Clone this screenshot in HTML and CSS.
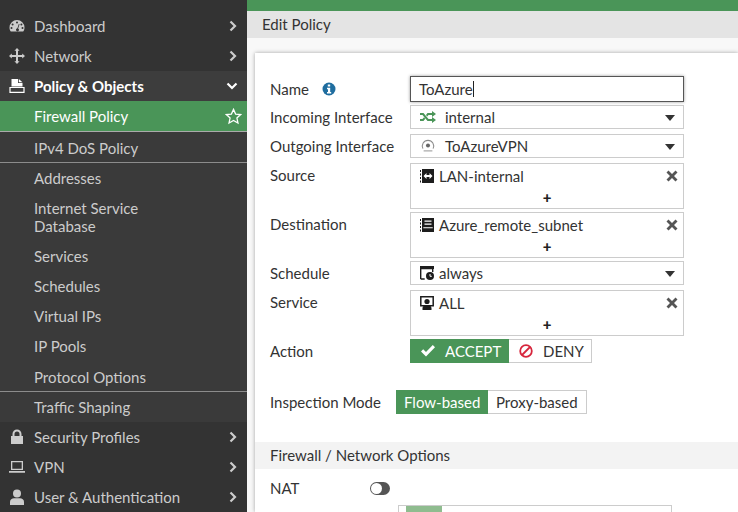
FILE: index.html
```html
<!DOCTYPE html>
<html lang="en">
<head>
<meta charset="utf-8">
<title>Edit Policy</title>
<link rel="stylesheet" href="styles.css">
</head>
<body>
<div class="app">
  <nav class="sidebar">
    <div class="nav-spacer"></div>
    <div class="nav-item">
      <svg class="nav-icon" viewBox="0 0 16 16"><path fill-rule="evenodd" d="M8 2a7.500 7.500 0 0 0-7.500 7.500c0 1.600.5 3 1.300 4h12.400c.8-1 1.300-2.400 1.300-4A7.500 7.500 0 0 0 8 2zM8 3.500a1 1 0 1 1 0 2 1 1 0 0 1 0-2zM3.600 5.400a1 1 0 1 1 0 2 1 1 0 0 1 0-2zM2.500 9a1 1 0 1 1 0 2 1 1 0 0 1 0-2zM12.400 5.400a1 1 0 1 1 0 2 1 1 0 0 1 0-2zM13.500 9a1 1 0 1 1 0 2 1 1 0 0 1 0-2zM9.800 6l.8.300-1.500 4.100a1.500 1.500 0 1 1-2.100 1.300c0-.8.600-1.400 1.400-1.500z"/></svg>
      <span class="nav-label">Dashboard</span>
      <svg class="chev" viewBox="0 0 8 12"><path d="M1.500 1.500 6 6l-4.500 4.500" /></svg>
    </div>
    <div class="nav-item">
      <svg class="nav-icon" viewBox="0 0 16 16"><path d="M8 0l2.600 2.800H9v4.200h4.200V5.400L16 8l-2.800 2.600V9H9v4.200h1.600L8 16l-2.600-2.800H7V9H2.800v1.600L0 8l2.800-2.600V7H7V2.800H5.400z"/></svg>
      <span class="nav-label">Network</span>
      <svg class="chev" viewBox="0 0 8 12"><path d="M1.500 1.500 6 6l-4.500 4.500" /></svg>
    </div>
    <div class="nav-item nav-open">
      <svg class="nav-icon" viewBox="0 0 16 16"><path d="M2.500 1h6.500v4h4.500v3.500H2.500z"/><path d="M9.800 1l3.700 3.300H9.800z"/><path fill="none" stroke="#fff" stroke-width="1.200" d="M1 9.500h14v4.800H1z"/></svg>
      <span class="nav-label">Policy &amp; Objects</span>
      <svg class="chev chev-down" viewBox="0 0 12 8"><path d="M1.500 1.500 6 6l4.500-4.500" /></svg>
    </div>
    <div class="sub-item sub-active">
      <span class="nav-label">Firewall Policy</span>
      <svg class="star" viewBox="0 0 16 16"><path d="M8 1.300l2 4.400 4.700.5-3.500 3.200 1 4.700L8 11.700l-4.200 2.400 1-4.700L1.300 6.200 6 5.700z"/></svg>
    </div>
    <div class="sub-item sub-ruled">IPv4 DoS Policy</div>
    <div class="sub-item">Addresses</div>
    <div class="sub-item sub-tall">Internet Service<br>Database</div>
    <div class="sub-item">Services</div>
    <div class="sub-item">Schedules</div>
    <div class="sub-item">Virtual IPs</div>
    <div class="sub-item">IP Pools</div>
    <div class="sub-item sub-ruled">Protocol Options</div>
    <div class="sub-item">Traffic Shaping</div>
    <div class="nav-item">
      <svg class="nav-icon" viewBox="0 0 16 16"><path d="M2 7h12v8H2z"/><path fill="none" stroke="#ccc" stroke-width="2" d="M4.500 7.500V5a3.500 3.500 0 0 1 7 0v2.500"/></svg>
      <span class="nav-label">Security Profiles</span>
      <svg class="chev" viewBox="0 0 8 12"><path d="M1.500 1.500 6 6l-4.500 4.500" /></svg>
    </div>
    <div class="nav-item">
      <svg class="nav-icon" viewBox="0 0 16 16"><path fill-rule="evenodd" d="M2 2h12v9H2zM3.300 3.300v6.400h9.400V3.300zM0 12h16v1.800H0z"/></svg>
      <span class="nav-label">VPN</span>
      <svg class="chev" viewBox="0 0 8 12"><path d="M1.500 1.500 6 6l-4.500 4.500" /></svg>
    </div>
    <div class="nav-item">
      <svg class="nav-icon" viewBox="0 0 16 16"><circle cx="8" cy="4.500" r="4"/><path d="M1 16v-3c0-2.500 2-3.700 4-3.700h6c2 0 4 1.200 4 3.700v3z"/></svg>
      <span class="nav-label">User &amp; Authentication</span>
      <svg class="chev" viewBox="0 0 8 12"><path d="M1.500 1.500 6 6l-4.500 4.500" /></svg>
    </div>
  </nav>

  <main class="main">
    <div class="topbar"></div>
    <div class="page-title">Edit Policy</div>
    <section class="card">
      <div class="form">
        <div class="row row-name">
          <label class="label">Name <svg class="info" viewBox="0 0 14 14"><circle cx="7" cy="7" r="6.500" fill="#1f6d9f"/><path fill="#fff" d="M5.800 2.500h2.400v2H5.800zM5 5.700h3.200v4.300h1v1.500H5V10h1V7.200H5z"/></svg></label>
          <div class="input">ToAzure<span class="caret"></span></div>
        </div>
        <div class="row row-sel">
          <label class="label">Incoming Interface</label>
          <div class="box select">
            <svg class="ico ico-wide" viewBox="0 0 16 12"><path fill="#4a9558" d="M0 2h3.500l5 6H12V6l4 3-4 3v-2H7.500l-5-6H0zM0 8h2.500l1.500-1.800 1.300 1.500L3.500 10H0zM7.500 2H12V0l4 3-4 3V4H8.500L7.200 5.500 6 4z"/></svg>
            <span class="val val-iface">internal</span>
            <span class="arrow"></span>
          </div>
        </div>
        <div class="row row-sel">
          <label class="label">Outgoing Interface</label>
          <div class="box select">
            <svg class="ico ico-wide" viewBox="0 0 16 16"><path fill="none" stroke="#8a8a8a" stroke-width="1.200" d="M2.200 11A6.500 6.500 0 1 1 13.800 11"/><circle cx="8" cy="7.500" r="2.300" fill="#666"/><path fill="#999" d="M3 13h10v1.200H3z"/></svg>
            <span class="val val-iface">ToAzureVPN</span>
            <span class="arrow"></span>
          </div>
        </div>
        <div class="row row-multi">
          <label class="label">Source</label>
          <div class="box multi">
            <div class="entry">
              <svg class="ico" viewBox="0 0 14 14"><path fill="#1d1d1d" d="M2 0h12v14H2z"/><path fill="#1d1d1d" d="M0 1h1v2H0zM0 4.500h1v2H0zM0 8h1v2H0zM0 11.500h1v2H0z"/><path fill="#fff" d="M3.500 7 6.500 4v2h3V4l3 3-3 3V8h-3v2z"/></svg>
              <span class="val">LAN-internal</span>
              <svg class="remove" viewBox="0 0 12 12"><path d="M2.500.5 6 4 9.500.5l2 2L8 6l3.500 3.500-2 2L6 8l-3.500 3.500-2-2L4 6 .5 2.500z"/></svg>
            </div>
            <div class="add">+</div>
          </div>
        </div>
        <div class="row row-multi">
          <label class="label">Destination</label>
          <div class="box multi">
            <div class="entry">
              <svg class="ico" viewBox="0 0 14 14"><path fill="#1d1d1d" fill-rule="evenodd" d="M2 0h12v14H2zM4.500 2.500v1.300h7V2.500zM4.500 5.500v1.300h7V5.500zM3.300 9.300v1h9.400v-1z"/><path fill="#1d1d1d" d="M0 1h1v2H0zM0 4.500h1v2H0zM0 8h1v2H0zM0 11.500h1v2H0z"/></svg>
              <span class="val">Azure_remote_subnet</span>
              <svg class="remove" viewBox="0 0 12 12"><path d="M2.500.5 6 4 9.500.5l2 2L8 6l3.500 3.500-2 2L6 8l-3.500 3.500-2-2L4 6 .5 2.500z"/></svg>
            </div>
            <div class="add">+</div>
          </div>
        </div>
        <div class="row row-sel">
          <label class="label">Schedule</label>
          <div class="box select">
            <svg class="ico" viewBox="0 0 14 14"><path fill="none" stroke="#1d1d1d" stroke-width="1.400" d="M.7 13V2.500h12V6M.7 13h4"/><path fill="#1d1d1d" d="M0 0h14v3H0z"/><circle cx="10" cy="10" r="4" fill="#1d1d1d"/><path fill="none" stroke="#fff" d="M10 8v2.300h1.800"/></svg>
            <span class="val">always</span>
            <span class="arrow"></span>
          </div>
        </div>
        <div class="row row-multi">
          <label class="label">Service</label>
          <div class="box multi">
            <div class="entry">
              <svg class="ico" viewBox="0 0 14 14"><path fill="none" stroke="#1d1d1d" stroke-width="1.500" d="M.8.800h12.400v9H.8z"/><circle cx="7" cy="5.500" r="2.600" fill="#1d1d1d"/><path fill="#1d1d1d" d="M2.500 14v-2c0-2 2-3 4.500-3s4.500 1 4.500 3v2z"/></svg>
              <span class="val">ALL</span>
              <svg class="remove" viewBox="0 0 12 12"><path d="M2.500.5 6 4 9.500.5l2 2L8 6l3.500 3.500-2 2L6 8l-3.500 3.500-2-2L4 6 .5 2.500z"/></svg>
            </div>
            <div class="add">+</div>
          </div>
        </div>
        <div class="row row-action">
          <label class="label">Action</label>
          <div class="toggle">
            <div class="tog tog-on tog-accept">
              <svg class="tog-ico" viewBox="0 0 14 12"><path fill="#fff" d="M0 6.500 2.200 4.300 5 7l6.800-7L14 2.200 5 11.500z"/></svg>ACCEPT
            </div>
            <div class="tog tog-off tog-deny">
              <svg class="tog-ico" viewBox="0 0 14 14"><circle cx="7" cy="7" r="5.800" fill="none" stroke="#d7263d" stroke-width="1.800"/><path stroke="#d7263d" stroke-width="1.800" d="M3 11 11 3"/></svg>DENY
            </div>
          </div>
        </div>
        <div class="row row-mode">
          <label class="label">Inspection Mode</label>
          <div class="toggle">
            <div class="tog tog-on tog-flow">Flow-based</div>
            <div class="tog tog-off tog-proxy">Proxy-based</div>
          </div>
        </div>
      </div>
      <h2 class="section">Firewall / Network Options</h2>
      <div class="row row-nat">
        <label class="label label-nat">NAT</label>
        <span class="switch"></span>
      </div>
      <div class="ippool"><span class="chip"></span></div>
    </section>
  </main>
</div>
</body>
</html>
```
FILE: styles.css
```css
* { box-sizing: border-box; }
html, body { margin: 0; height: 100%; overflow: hidden; }
body { font-family: Lato, "Open Sans", sans-serif; font-size: 15px; color: #333; background: #f8f8f8; }
.app { display: flex; width: 738px; height: 512px; overflow: hidden; }

.sidebar { width: 247px; flex: none; background: #333; color: #ccc; display: flex; flex-direction: column; }
.nav-spacer { height: 11px; flex: none; }
.nav-item { height: 30px; flex: none; display: flex; align-items: center; padding-left: 9px; padding-right: 9px; }
.nav-icon { width: 16px; height: 16px; fill: #ccc; flex: none; margin-right: 9px; }
.nav-label { flex: 1; white-space: nowrap; }
.chev { width: 8px; height: 12px; fill: none; stroke: #ccc; stroke-width: 2.200; flex: none; margin-right: 1px; }
.chev-down { width: 12px; height: 8px; stroke: #fff; margin-right: 0; }
.nav-open { background: #3d3d3d; color: #fff; font-weight: 700; }
.nav-open .nav-icon { fill: #fff; }
.sub-item { height: 30px; flex: none; display: flex; align-items: center; padding: 0 6px 0 34px; background: #3d3d3d; line-height: 18px; }
.sub-item:nth-child(n) { background: #3a3a3a; }
.sub-tall { height: 48px; display: block; padding-top: 6px; }
.sub-ruled { height: 31px; padding-top: 1px; border-bottom: 1px solid #8c8c8c; }
.sub-active { background: #4a9558 !important; color: #fff; height: 31px; border-bottom: 1px solid #aaa; padding-right: 5px; }
.star { width: 17px; height: 17px; fill: none; stroke: #fff; stroke-width: 1.200; flex: none; }

.main { flex: 1; min-width: 0; display: flex; flex-direction: column; }
.topbar { height: 11px; flex: none; background: #4a9558; }
.page-title { height: 27px; flex: none; background: #e4e4e4; padding-left: 15px; line-height: 27px; }
.card { margin: 15px 0 0 8px; flex: 1; background: #fff; box-shadow: 0 0 4px rgba(0, 0, 0, .35); overflow: hidden; }

.form { padding: 23px 0 0 15px; }
.row { display: flex; align-items: flex-start; }
.row-name { margin-bottom: 3px; }
.row-sel { margin-bottom: 5px; }
.row-multi { margin-bottom: 3px; }
.row-action { margin-bottom: 27px; }
.row-mode { margin-bottom: 28px; }
.label { width: 140px; flex: none; line-height: 24px; display: block; white-space: nowrap; }
.row-mode .label { width: 126px; }
.info { width: 14px; height: 14px; margin-left: 9px; vertical-align: -1px; }

.input { width: 274px; height: 26px; border: 1px solid #555; box-shadow: 0 0 3px rgba(0, 0, 0, .4); padding-left: 8px; line-height: 24px; display: flex; align-items: center; }
.caret { width: 1px; height: 16px; background: #222; }
.row-name .label { line-height: 26px; }

.box { width: 274px; border: 1px solid #ccc; background: #fff; }
.select { height: 24px; display: flex; align-items: center; padding: 0 8px 0 9px; }
.multi { height: 46px; padding: 0 4px 0 9px; }
.entry { height: 23px; display: flex; align-items: center; }
.ico { width: 14px; height: 14px; flex: none; margin-right: 5px; }
.ico-wide { width: 16px; margin-right: 9px; }
.val { flex: 1; white-space: nowrap; }
.arrow { width: 0; height: 0; border-left: 5px solid transparent; border-right: 5px solid transparent; border-top: 6px solid #333; flex: none; margin-top: 1px; }
.remove { width: 12px; height: 12px; fill: #555; flex: none; margin-right: 1px; }
.add { text-align: center; font-weight: 900; line-height: 20px; height: 20px; margin-left: -5px; color: #222; }

.toggle { display: flex; height: 24px; }
.tog { height: 24px; display: flex; align-items: center; white-space: nowrap; }
.tog-on { background: #4a9558; color: #fff; }
.tog-off { background: #fff; border: 1px solid #ccc; border-left: 0; }
.tog-accept { width: 99px; padding-left: 11px; }
.tog-deny { width: 83px; padding-left: 10px; }
.tog-ico { width: 14px; height: 14px; flex: none; margin-right: 10px; }
.tog-flow { width: 92px; padding-left: 8px; }
.tog-proxy { width: 99px; padding-left: 8px; }

.section { margin: 0; height: 27px; background: #f3f3f3; font-size: 15px; font-weight: 400; line-height: 27px; padding-left: 15px; }
.row-nat { align-items: center; padding: 7px 0 0 15px; height: 31px; }
.label-nat { width: 100px; }
.switch { position: relative; width: 20px; height: 13px; border-radius: 7px; background: #555; flex: none; }
.switch::before { content: ""; position: absolute; left: 1px; top: 1px; width: 11px; height: 11px; border-radius: 50%; background: #fff; }
.ippool { width: 274px; height: 30px; margin: 5px 0 0 143px; border: 1px solid #ccc; padding-left: 7px; }
.chip { display: block; width: 36px; height: 20px; background: #8fbc8f; }
```
